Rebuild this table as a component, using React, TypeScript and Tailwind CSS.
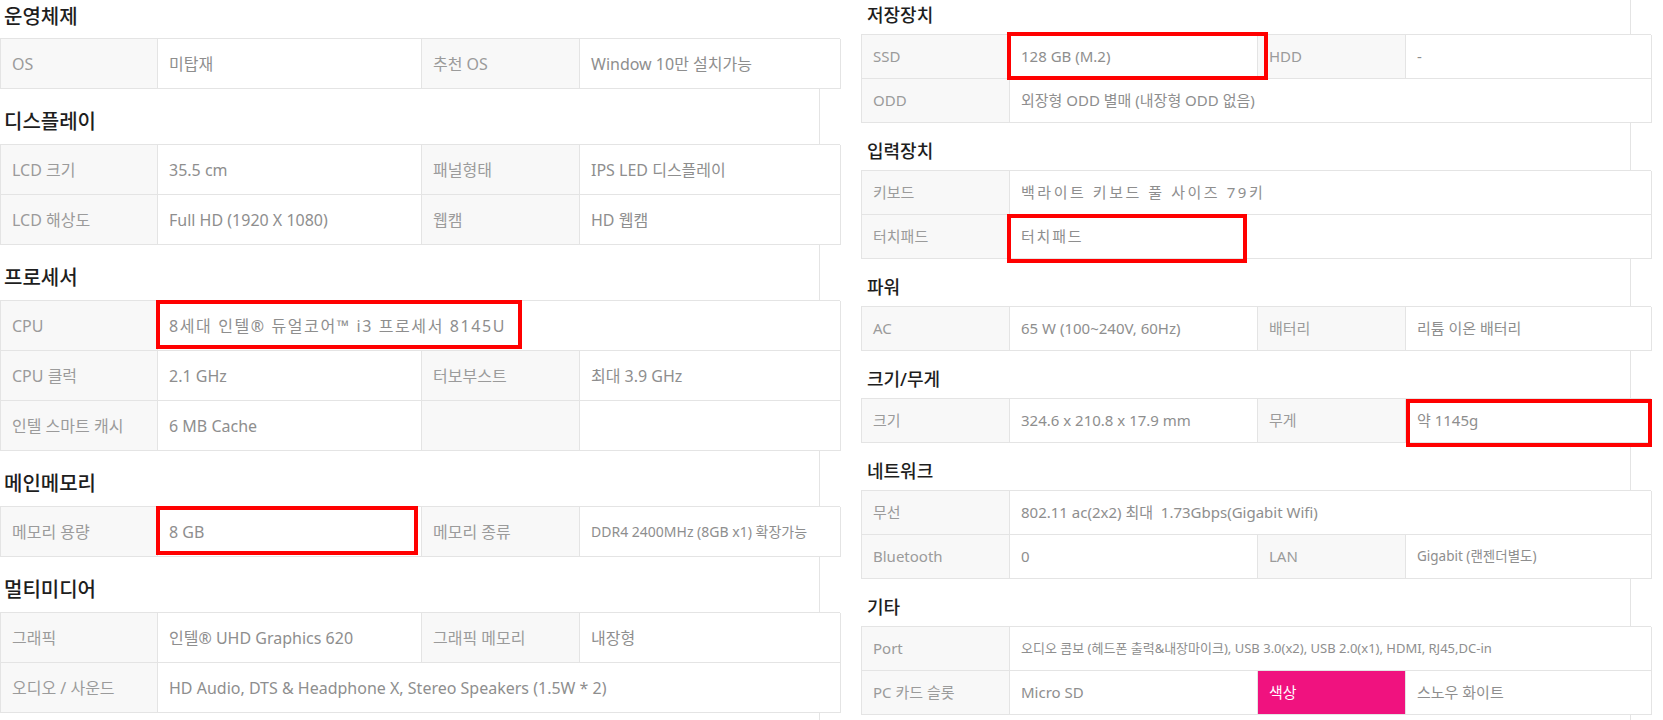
import React from "react";

type Cell = {
	text?: string;
	label?: boolean;
	span?: boolean;
	className?: string;
	mark?: string;
	pink?: boolean;
};

type Section = { title: string; rows: Cell[][] };

const leftSections: Section[] = [
	{
		title: "운영체제",
		rows: [
			[
				{ text: "OS", label: true },
				{ text: "미탑재" },
				{ text: "추천 OS", label: true },
				{ text: "Window 10만 설치가능" },
			],
		],
	},
	{
		title: "디스플레이",
		rows: [
			[
				{ text: "LCD 크기", label: true },
				{ text: "35.5 cm" },
				{ text: "패널형태", label: true },
				{ text: "IPS LED 디스플레이" },
			],
			[
				{ text: "LCD 해상도", label: true },
				{ text: "Full HD (1920 X 1080)" },
				{ text: "웹캠", label: true },
				{ text: "HD 웹캠" },
			],
		],
	},
	{
		title: "프로세서",
		rows: [
			[
				{ text: "CPU", label: true },
				{
					text: "8세대 인텔® 듀얼코어™ i3 프로세서 8145U",
					span: true,
					className: "tracking-[0.1em]",
					mark: "left-[-2px] top-[-1px] w-[366px] h-[49px]",
				},
			],
			[
				{ text: "CPU 클럭", label: true },
				{ text: "2.1 GHz" },
				{ text: "터보부스트", label: true },
				{ text: "최대 3.9 GHz" },
			],
			[
				{ text: "인텔 스마트 캐시", label: true },
				{ text: "6 MB Cache" },
				{ text: "", label: true },
				{ text: "" },
			],
		],
	},
	{
		title: "메인메모리",
		rows: [
			[
				{ text: "메모리 용량", label: true },
				{
					text: "8 GB",
					mark: "left-[-2px] top-[-1px] w-[262px] h-[49px]",
				},
				{ text: "메모리 종류", label: true },
				{ text: "DDR4 2400MHz (8GB x1) 확장가능", className: "text-[14px]" },
			],
		],
	},
	{
		title: "멀티미디어",
		rows: [
			[
				{ text: "그래픽", label: true },
				{ text: "인텔® UHD Graphics 620" },
				{ text: "그래픽 메모리", label: true },
				{ text: "내장형" },
			],
			[
				{ text: "오디오 / 사운드", label: true },
				{
					text: "HD Audio, DTS & Headphone X, Stereo Speakers (1.5W * 2)",
					span: true,
				},
			],
		],
	},
];

const rightSections: Section[] = [
	{
		title: "저장장치",
		rows: [
			[
				{ text: "SSD", label: true },
				{
					text: "128 GB (M.2)",
					mark: "left-[-3px] top-[-3px] w-[261px] h-[48px]",
				},
				{ text: "HDD", label: true },
				{ text: "-" },
			],
			[
				{ text: "ODD", label: true },
				{ text: "외장형 ODD 별매 (내장형 ODD 없음)", span: true },
			],
		],
	},
	{
		title: "입력장치",
		rows: [
			[
				{ text: "키보드", label: true },
				{
					text: "백라이트 키보드 풀 사이즈 79키",
					span: true,
					className: "tracking-[0.17em]",
				},
			],
			[
				{ text: "터치패드", label: true },
				{
					text: "터치패드",
					span: true,
					className: "tracking-[0.12em]",
					mark: "left-[-3px] top-[-1px] w-[240px] h-[49px]",
				},
			],
		],
	},
	{
		title: "파워",
		rows: [
			[
				{ text: "AC", label: true },
				{ text: "65 W (100~240V, 60Hz)" },
				{ text: "배터리", label: true },
				{ text: "리튬 이온 배터리" },
			],
		],
	},
	{
		title: "크기/무게",
		rows: [
			[
				{ text: "크기", label: true },
				{ text: "324.6 x 210.8 x 17.9 mm" },
				{ text: "무게", label: true },
				{
					text: "약 1145g",
					mark: "left-[0px] top-[0px] w-[246px] h-[48px]",
				},
			],
		],
	},
	{
		title: "네트워크",
		rows: [
			[
				{ text: "무선", label: true },
				{
					text: "802.11 ac(2x2) 최대\u00a0 1.73Gbps(Gigabit Wifi)",
					span: true,
				},
			],
			[
				{ text: "Bluetooth", label: true },
				{ text: "0" },
				{ text: "LAN", label: true },
				{ text: "Gigabit (랜젠더별도)", className: "text-[13.5px]" },
			],
		],
	},
	{
		title: "기타",
		rows: [
			[
				{ text: "Port", label: true },
				{
					text: "오디오 콤보 (헤드폰 출력&내장마이크), USB 3.0(x2), USB 2.0(x1), HDMI, RJ45,DC-in",
					span: true,
					className: "text-[13px]",
				},
			],
			[
				{ text: "PC 카드 슬롯", label: true },
				{ text: "Micro SD" },
				{ text: "색상", pink: true },
				{ text: "스노우 화이트" },
			],
		],
	},
];

function SpecTable({
	rows,
	cols,
	rowH,
	size,
}: {
	rows: Cell[][];
	cols: string;
	rowH: string;
	size: string;
}) {
	return (
		<div className={`grid ${cols} border-t border-l border-[#e4e4e4] ${size}`}>
			{rows.map((row, ri) =>
				row.map((c, ci) => (
					<div
						key={`${ri}-${ci}`}
						className={[
							"relative flex items-center px-[11px] border-r border-b border-[#e4e4e4] whitespace-nowrap",
							rowH,
							c.span ? "col-span-3" : "",
							c.pink
								? "bg-[#f0127f] text-white"
								: c.label
									? "bg-[#f8f8f8] text-[#9b9b9b]"
									: "bg-white text-[#8e8e8e]",
							c.className ?? "",
						].join(" ")}
					>
						{c.text}
						{c.mark && (
							<span
								className={`absolute z-10 border-[4px] border-[#ff0000] ${c.mark}`}
							/>
						)}
					</div>
				)),
			)}
		</div>
	);
}

export default function App() {
	return (
		<div
			className="flex w-[1663px] h-[720px] overflow-hidden bg-white"
			style={{ fontFamily: '"Noto Sans", "Noto Sans CJK KR", sans-serif' }}
		>
			{/* left column */}
			<div className="w-[840px] shrink-0">
				<h2 className="h-[38px] flex items-end pb-[9px] pl-[4px] text-[20px] leading-[24px] font-medium text-[#1e1e1e]">
					{leftSections[0].title}
				</h2>
				<div className="w-[820px] border-r border-[#e4e4e4] h-[700px]">
					{leftSections.map((s, i) => (
						<div key={s.title} className="w-[840px]">
							{i > 0 && (
								<h2 className="h-[55px] flex items-end pb-[10px] pl-[4px] text-[20px] leading-[24px] font-medium text-[#1e1e1e]">
									{s.title}
								</h2>
							)}
							<SpecTable
								rows={s.rows}
								cols="grid-cols-[157px_264px_158px_261px]"
								rowH="h-[50px]"
								size="text-[16px]"
							/>
						</div>
					))}
				</div>
			</div>

			{/* right column */}
			<div className="w-[823px] shrink-0 pl-[21px]">
				<div className="w-[770px] border-r border-[#e4e4e4] h-[720px]">
					{rightSections.map((s, i) => (
						<div key={s.title} className="w-[790px]">
							<h2
								className={`${i === 0 ? "h-[34px]" : "h-[47px]"} flex items-end pb-[8px] pl-[6px] text-[18px] leading-[22px] font-medium text-[#1e1e1e]`}
							>
								{s.title}
							</h2>
							<SpecTable
								rows={s.rows}
								cols="grid-cols-[148px_248px_148px_246px]"
								rowH="h-[44px]"
								size="text-[15px]"
							/>
						</div>
					))}
				</div>
			</div>
		</div>
	);
}
